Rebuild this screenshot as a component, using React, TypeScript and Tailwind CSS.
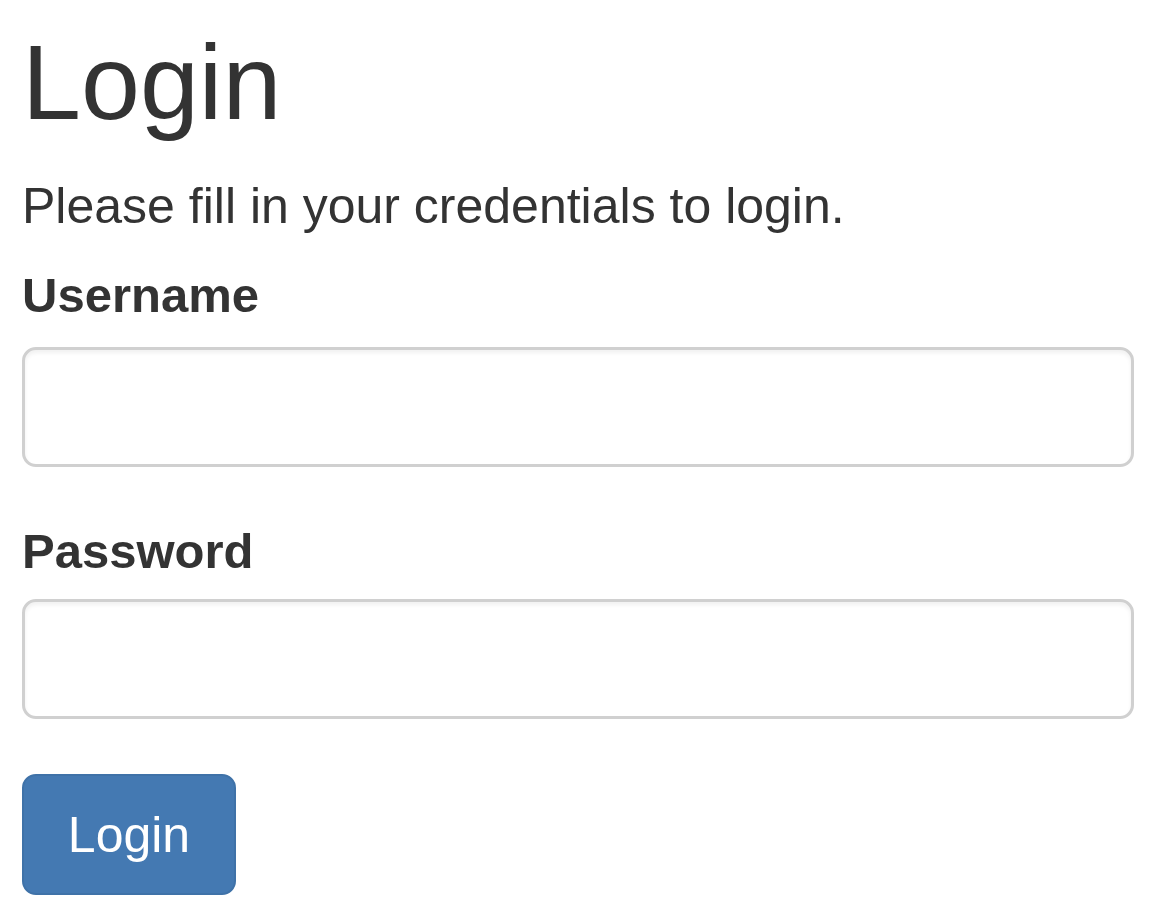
import React from "react";

const App: React.FC = () => {
  return (
    <main className="min-h-screen bg-white pl-[22px] pr-[30px] pt-[29px] text-[#333] font-['Liberation_Sans',Arial,Helvetica,sans-serif]">
      <h1 className="text-[106px] leading-[106px] font-normal">Login</h1>
      <p className="mt-[46px] text-[50px] leading-[50px]">
        Please fill in your credentials to login.
      </p>

      <form className="flex flex-col" onSubmit={(e) => e.preventDefault()}>
        <label className="mt-[40px] text-[49px] leading-[49px] font-bold">
          Username
        </label>
        <input
          type="text"
          className="mt-[27px] h-[120px] w-full rounded-[14px] border-[3px] border-[#d0d0d0] bg-white px-[40px] text-[49px] shadow-[inset_0_3px_4px_rgba(0,0,0,0.06)] outline-none"
        />

        <label className="mt-[60px] text-[49px] leading-[49px] font-bold">
          Password
        </label>
        <input
          type="password"
          className="mt-[23px] h-[120px] w-full rounded-[14px] border-[3px] border-[#d0d0d0] bg-white px-[40px] text-[49px] shadow-[inset_0_3px_4px_rgba(0,0,0,0.06)] outline-none"
        />

        <div className="mt-[55px]">
          <button
            type="submit"
            className="flex h-[121px] w-[214px] items-center justify-center rounded-[14px] border-[2px] border-[#3f72a8] bg-[#4479b2] text-[50px] leading-none text-white"
          >
            Login
          </button>
        </div>
      </form>
    </main>
  );
};

export default App;
